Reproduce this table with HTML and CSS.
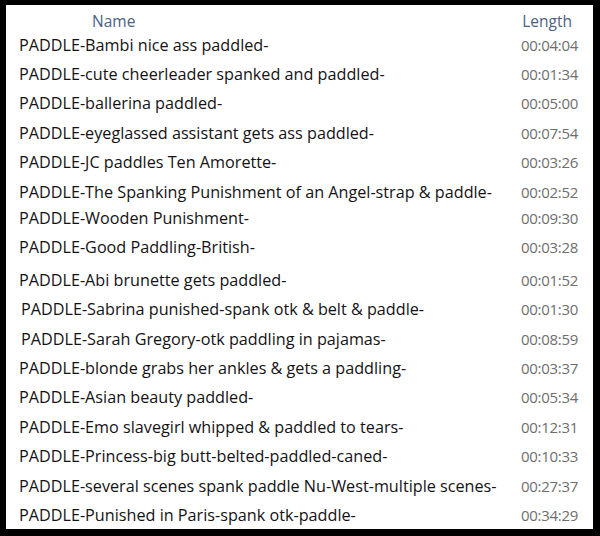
FILE: index.html
```html
<!DOCTYPE html>
<html lang="en">
<head>
    <meta charset="UTF-8">
    <title>Media list</title>
    <link rel="stylesheet" href="styles.css">
</head>
<body>
    <div class="panel">
        <div class="header">
            <span class="col-name">Name</span>
            <span class="col-length">Length</span>
        </div>
        <div class="list">
            <div class="row"><span class="name">PADDLE-Bambi nice ass paddled-</span><span class="time">00:04:04</span></div>
            <div class="row"><span class="name">PADDLE-cute cheerleader spanked and paddled-</span><span class="time">00:01:34</span></div>
            <div class="row"><span class="name">PADDLE-ballerina paddled-</span><span class="time">00:05:00</span></div>
            <div class="row"><span class="name">PADDLE-eyeglassed assistant gets ass paddled-</span><span class="time">00:07:54</span></div>
            <div class="row"><span class="name">PADDLE-JC paddles Ten Amorette-</span><span class="time">00:03:26</span></div>
            <div class="row"><span class="name">PADDLE-The Spanking Punishment of an Angel-strap &amp; paddle-</span><span class="time">00:02:52</span></div>
            <div class="row up"><span class="name">PADDLE-Wooden Punishment-</span><span class="time">00:09:30</span></div>
            <div class="row"><span class="name">PADDLE-Good Paddling-British-</span><span class="time">00:03:28</span></div>
            <div class="row down"><span class="name">PADDLE-Abi brunette gets paddled-</span><span class="time">00:01:52</span></div>
            <div class="row indent"><span class="name">PADDLE-Sabrina punished-spank otk &amp; belt &amp; paddle-</span><span class="time">00:01:30</span></div>
            <div class="row indent"><span class="name">PADDLE-Sarah Gregory-otk paddling in pajamas-</span><span class="time">00:08:59</span></div>
            <div class="row"><span class="name">PADDLE-blonde grabs her ankles &amp; gets a paddling-</span><span class="time">00:03:37</span></div>
            <div class="row"><span class="name">PADDLE-Asian beauty paddled-</span><span class="time">00:05:34</span></div>
            <div class="row"><span class="name">PADDLE-Emo slavegirl whipped &amp; paddled to tears-</span><span class="time">00:12:31</span></div>
            <div class="row"><span class="name">PADDLE-Princess-big butt-belted-paddled-caned-</span><span class="time">00:10:33</span></div>
            <div class="row"><span class="name">PADDLE-several scenes spank paddle Nu-West-multiple scenes-</span><span class="time">00:27:37</span></div>
            <div class="row"><span class="name">PADDLE-Punished in Paris-spank otk-paddle-</span><span class="time">00:34:29</span></div>
        </div>
    </div>
</body>
</html>
```

FILE: styles.css
```css
body {
    margin: 0;
    background-color: #000;
    font-family: "Open Sans", "Noto Sans", sans-serif;
}

.panel {
    margin: 5px 7px 0 6px;
    height: 524px;
    background: #fff;
}

.header {
    display: flex;
    justify-content: space-between;
    height: 25px;
    font-size: 15.5px;
    color: #4d6182;
}

.col-name {
    margin-left: 86px;
    line-height: 32px;
}

.col-length {
    margin-right: 21px;
    line-height: 33px;
}

.list {
    padding: 0 15px 0 13px;
}

.row {
    display: flex;
    justify-content: space-between;
    align-items: center;
    height: 29.4px;
}

.row.up {
    margin-top: -3px;
}

.row.down {
    margin-top: 3px;
}

.row.indent {
    padding-left: 2px;
}

.name {
    font-size: 16.2px;
    color: #141214;
    white-space: nowrap;
}

.time {
    font-size: 15px;
    letter-spacing: -0.3px;
    color: #6e6e6e;
}
```
